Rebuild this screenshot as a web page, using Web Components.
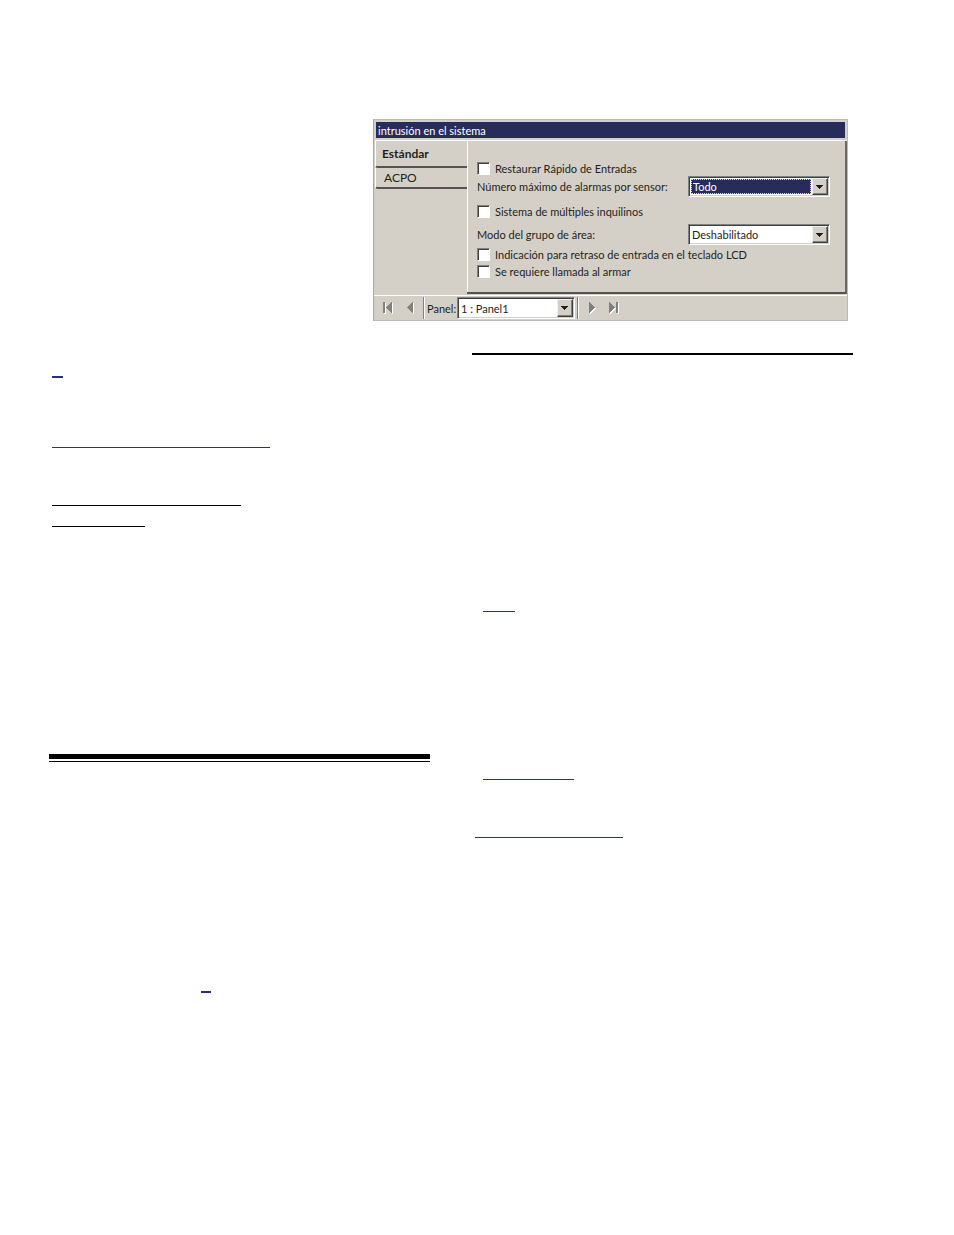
<!DOCTYPE html>
<html lang="es">
<head>
<meta charset="utf-8">
<title>intrusión en el sistema</title>
<style>
  body {
    margin: 0;
    background: #fff;
    color: #231f20;
    font-family: Lato, "Liberation Sans", sans-serif;
    font-size: 11px;
    line-height: 13px;
  }
  main {
    padding: 119px 101px 40px 49px;
  }
  intrusion-window {
    max-width: 475px;
    margin: 0 5px 32px auto;
  }
  .columns {
    display: grid;
    grid-template-columns: 1fr 1fr;
    gap: 42px;
  }
</style>
</head>
<body>
<main>
  <intrusion-window heading="intrusión en el sistema">
    <side-tab slot="tabs" active>Estándar</side-tab>
    <side-tab slot="tabs">ACPO</side-tab>

    <check-row>Restaurar Rápido de Entradas</check-row>
    <select-row label="Número máximo de alarmas por sensor:" options="Todo" focused></select-row>
    <check-row>Sistema de múltiples inquilinos</check-row>
    <select-row label="Modo del grupo de área:" options="Deshabilitado"></select-row>
    <check-row>Indicación para retraso de entrada en el teclado LCD</check-row>
    <check-row>Se requiere llamada al armar</check-row>

    <panel-navigator slot="toolbar"></panel-navigator>
  </intrusion-window>

  <div class="columns">
    <section>
      <doc-rule space="23" indent="3" width="11" weight="2" blue></doc-rule>
      <doc-rule space="69" indent="3" width="218" blue></doc-rule>
      <doc-rule space="57" indent="3" width="189"></doc-rule>
      <doc-rule space="20" indent="3" width="93"></doc-rule>
      <doc-rule space="227" weight="5"></doc-rule>
      <doc-rule space="2"></doc-rule>
      <doc-rule space="229" indent="152" width="10" weight="2" blue></doc-rule>
    </section>
    <section>
      <doc-rule weight="2"></doc-rule>
      <doc-rule space="256" indent="11" width="32" blue></doc-rule>
      <doc-rule space="167" indent="11" width="91" blue></doc-rule>
      <doc-rule space="57" indent="3" width="148" blue></doc-rule>
    </section>
  </div>
</main>

<script>
  class DocRule extends HTMLElement {
    constructor() {
      super();
      this.attachShadow({mode: 'open'});
    }

    connectedCallback() {
      const px = (name, fallback) => (this.getAttribute(name) || fallback) + 'px';
      const width = this.hasAttribute('width') ? px('width') : 'auto';
      this.shadowRoot.innerHTML = `
      <style>
        :host {
          display: flow-root;
        }
        hr {
          margin: ${px('space', 0)} 0 0 ${px('indent', 0)};
          border: 0;
          width: ${width};
          height: ${px('weight', 1)};
          background: #000;
        }
        :host([blue]) hr {
          background: #2b2f77;
        }
      </style>
      <hr>
      `;
    }
  }
  customElements.define('doc-rule', DocRule);

  class IntrusionWindow extends HTMLElement {
    constructor() {
      super();
      this.attachShadow({mode: 'open'});
    }

    connectedCallback() {
      this.shadowRoot.innerHTML = `
      <style>
        :host {
          display: block;
          box-sizing: border-box;
          background: #d4d0c8;
          border: 1px solid #bdbbb6;
          border-left-color: #aaa8a4;
        }
        h1 {
          margin: 2px 2px 2px 2px;
          padding: 2px 2px 1px;
          background: #282c5c;
          color: #fff;
          font-size: 11px;
          font-weight: normal;
          line-height: 13px;
        }
        .body {
          display: grid;
          grid-template-columns: 92px 1fr;
          margin-left: 1px;
          border-top: 1px solid #fff;
        }
        .panel {
          display: grid;
          grid-template-rows: 14px 29px 19px 24px 17px 27px;
          align-items: start;
          padding: 21px 15px 0 10px;
          border: solid #55534f;
          border-width: 0 2px 2px 0;
          border-right-color: #6b6966;
          box-shadow: inset 1px 0 #fff;
        }
      </style>
      <h1>${this.getAttribute('heading')}</h1>
      <div class="body">
        <nav><slot name="tabs"></slot></nav>
        <div class="panel"><slot></slot></div>
      </div>
      <slot name="toolbar"></slot>
      `;
    }
  }
  customElements.define('intrusion-window', IntrusionWindow);

  class SideTab extends HTMLElement {
    constructor() {
      super();
      this.attachShadow({mode: 'open'}).innerHTML = `
      <style>
        :host {
          display: block;
        }
        button {
          display: block;
          box-sizing: border-box;
          width: 100%;
          height: 21px;
          padding: 0 0 0 8px;
          background: none;
          border: solid #fff;
          border-width: 0 0 2px 1px;
          border-bottom-color: #55534f;
          border-radius: 0 0 0 3px;
          color: inherit;
          font-family: inherit;
          font-size: 12px;
          line-height: 17px;
          text-align: left;
        }
        :host([active]) button {
          height: 27px;
          padding: 0 0 0 6px;
          font-weight: bold;
        }
      </style>
      <button type="button"><slot></slot></button>
      `;
    }
  }
  customElements.define('side-tab', SideTab);

  class CheckRow extends HTMLElement {
    constructor() {
      super();
      this.attachShadow({mode: 'open'}).innerHTML = `
      <style>
        :host {
          display: block;
        }
        label {
          display: flex;
          gap: 5px;
          white-space: nowrap;
        }
        input {
          appearance: none;
          flex: none;
          box-sizing: border-box;
          width: 13px;
          height: 13px;
          margin: 0;
          background: #fff;
          border: 1px solid #808080;
          border-right-color: #fff;
          border-bottom-color: #fff;
          box-shadow: inset 1px 1px #404040;
        }
        input:checked {
          background: #282c5c;
        }
      </style>
      <label><input type="checkbox"><slot></slot></label>
      `;
    }
  }
  customElements.define('check-row', CheckRow);

  // drop-down styles shared by the form rows and the navigator
  const selectStyle = `
    .box {
      position: relative;
      flex: none;
      box-sizing: border-box;
      height: 21px;
      padding: 1px;
      background: #fff;
      border: 1px solid #808080;
      border-right-color: #fff;
      border-bottom-color: #fff;
      box-shadow: inset 1px 1px #404040, inset -1px -1px #d4d0c8;
    }
    select {
      appearance: none;
      display: block;
      box-sizing: border-box;
      width: 100%;
      height: 100%;
      margin: 0;
      padding: 0 18px 0 2px;
      border: 0;
      border-radius: 0;
      outline: 0;
      background: none;
      color: inherit;
      font: inherit;
    }
    .arrow {
      position: absolute;
      top: 1px;
      right: 1px;
      bottom: 1px;
      display: grid;
      place-items: center;
      box-sizing: border-box;
      width: 16px;
      background: #d4d0c8;
      border: 1px solid #f2f0ec;
      border-right-color: #404040;
      border-bottom-color: #404040;
      box-shadow: inset -1px -1px #808080;
      pointer-events: none;
    }
  `;
  const arrow = `<span class="arrow"><svg width="8" height="4" shape-rendering="crispEdges"><path d="M0 0h7v1h-1v1h-1v1h-1v1h-1v-1h-1v-1h-1v-1h-1z" fill="#231f20"/></svg></span>`;

  class SelectRow extends HTMLElement {
    constructor() {
      super();
      this.attachShadow({mode: 'open'});
    }

    connectedCallback() {
      const options = this.getAttribute('options').split(',');
      this.shadowRoot.innerHTML = `
      <style>
        ${selectStyle}
        :host {
          display: flex;
          justify-content: space-between;
          align-items: center;
          white-space: nowrap;
        }
        .box {
          width: 142px;
        }
        :host([focused]) .box {
          padding: 2px 18px 2px 2px;
        }
        :host([focused]) select {
          padding: 0 0 0 1px;
          background: #282c5c;
          border: 1px dotted #f3d96b;
          color: #fff;
        }
      </style>
      <label for="value">${this.getAttribute('label')}</label>
      <span class="box">
        <select id="value">${options.map(o => `<option>${o}</option>`).join('')}</select>
        ${arrow}
      </span>
      `;
    }
  }
  customElements.define('select-row', SelectRow);

  class PanelNavigator extends HTMLElement {
    constructor() {
      super();
      this.attachShadow({mode: 'open'});
    }

    connectedCallback() {
      const icon = d => `
        <svg width="14" height="14" viewBox="0 0 14 14" shape-rendering="crispEdges">
          <path d="${d}" fill="#fff" transform="translate(1 1)"/>
          <path d="${d}" fill="#808080"/>
        </svg>`;
      this.shadowRoot.innerHTML = `
      <style>
        ${selectStyle}
        :host {
          display: flex;
          align-items: center;
          height: 25px;
          padding-left: 3px;
          border-top: 1px solid #fff;
          margin-top: 1px;
          box-sizing: border-box;
        }
        button {
          display: grid;
          place-items: center;
          width: 22px;
          height: 22px;
          padding: 0;
          background: none;
          border: 0;
        }
        i {
          align-self: stretch;
          width: 1px;
          margin: 1px 2px;
          background: #808080;
          border-right: 1px solid #fff;
        }
        label {
          width: 30px;
        }
        .box {
          width: 118px;
          height: 22px;
        }
      </style>
      <button type="button" aria-label="Primero">${icon('M2 1h2v11h-2zM11 1v11h-1v-1h-1v-1h-1v-1h-1v-1h-1v-1h-1v-1h1v-1h1v-1h1v-1h1v-1h1v-1z')}</button>
      <button type="button" aria-label="Anterior">${icon('M10 1v11h-1v-1h-1v-1h-1v-1h-1v-1h-1v-1h-1v-1h1v-1h1v-1h1v-1h1v-1h1v-1z')}</button>
      <i></i>
      <label for="panel">Panel:</label>
      <span class="box">
        <select id="panel"><option>1 : Panel1</option></select>
        ${arrow}
      </span>
      <i></i>
      <button type="button" aria-label="Siguiente">${icon('M4 1v11h1v-1h1v-1h1v-1h1v-1h1v-1h1v-1h-1v-1h-1v-1h-1v-1h-1v-1h-1v-1z')}</button>
      <button type="button" aria-label="Último">${icon('M2 1v11h1v-1h1v-1h1v-1h1v-1h1v-1h1v-1h-1v-1h-1v-1h-1v-1h-1v-1h-1v-1zM9 1h2v11h-2z')}</button>
      `;
    }
  }
  customElements.define('panel-navigator', PanelNavigator);
</script>
</body>
</html>
